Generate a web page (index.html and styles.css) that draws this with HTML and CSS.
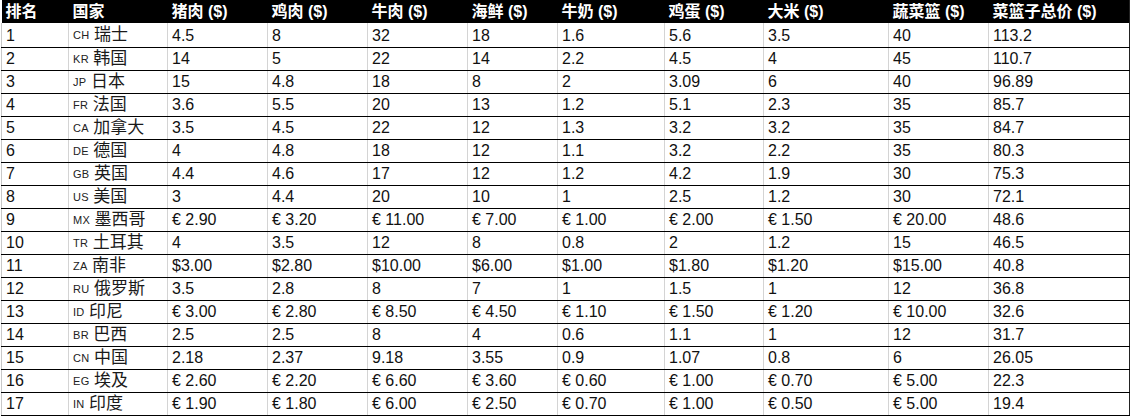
FILE: index.html
```html
<!DOCTYPE html>
<html lang="zh">
<head>
<meta charset="utf-8">
<title>菜篮子价格</title>
<link rel="stylesheet" href="styles.css">
</head>
<body>
<table class="sheet">
<colgroup>
<col class="c-rank"><col class="c-country"><col class="c-n"><col class="c-n"><col class="c-n"><col class="c-n2"><col class="c-n3"><col class="c-n2"><col class="c-n4"><col class="c-n"><col class="c-total">
</colgroup>
<thead>
<tr><th>排名</th><th>国家</th><th>猪肉 ($)</th><th>鸡肉 ($)</th><th>牛肉 ($)</th><th>海鲜 ($)</th><th>牛奶 ($)</th><th>鸡蛋 ($)</th><th>大米 ($)</th><th>蔬菜篮 ($)</th><th>菜篮子总价 ($)</th></tr>
</thead>
<tbody>
<tr class="first"><td>1</td><td><span class="cc">CH</span> <span class="zh">瑞士</span></td><td>4.5</td><td>8</td><td>32</td><td>18</td><td>1.6</td><td>5.6</td><td>3.5</td><td>40</td><td>113.2</td></tr>
<tr><td>2</td><td><span class="cc">KR</span> <span class="zh">韩国</span></td><td>14</td><td>5</td><td>22</td><td>14</td><td>2.2</td><td>4.5</td><td>4</td><td>45</td><td>110.7</td></tr>
<tr><td>3</td><td><span class="cc">JP</span> <span class="zh">日本</span></td><td>15</td><td>4.8</td><td>18</td><td>8</td><td>2</td><td>3.09</td><td>6</td><td>40</td><td>96.89</td></tr>
<tr><td>4</td><td><span class="cc">FR</span> <span class="zh">法国</span></td><td>3.6</td><td>5.5</td><td>20</td><td>13</td><td>1.2</td><td>5.1</td><td>2.3</td><td>35</td><td>85.7</td></tr>
<tr><td>5</td><td><span class="cc">CA</span> <span class="zh">加拿大</span></td><td>3.5</td><td>4.5</td><td>22</td><td>12</td><td>1.3</td><td>3.2</td><td>3.2</td><td>35</td><td>84.7</td></tr>
<tr><td>6</td><td><span class="cc">DE</span> <span class="zh">德国</span></td><td>4</td><td>4.8</td><td>18</td><td>12</td><td>1.1</td><td>3.2</td><td>2.2</td><td>35</td><td>80.3</td></tr>
<tr><td>7</td><td><span class="cc">GB</span> <span class="zh">英国</span></td><td>4.4</td><td>4.6</td><td>17</td><td>12</td><td>1.2</td><td>4.2</td><td>1.9</td><td>30</td><td>75.3</td></tr>
<tr><td>8</td><td><span class="cc">US</span> <span class="zh">美国</span></td><td>3</td><td>4.4</td><td>20</td><td>10</td><td>1</td><td>2.5</td><td>1.2</td><td>30</td><td>72.1</td></tr>
<tr><td>9</td><td><span class="cc">MX</span> <span class="zh">墨西哥</span></td><td>€ 2.90</td><td>€ 3.20</td><td>€ 11.00</td><td>€ 7.00</td><td>€ 1.00</td><td>€ 2.00</td><td>€ 1.50</td><td>€ 20.00</td><td>48.6</td></tr>
<tr><td>10</td><td><span class="cc">TR</span> <span class="zh">土耳其</span></td><td>4</td><td>3.5</td><td>12</td><td>8</td><td>0.8</td><td>2</td><td>1.2</td><td>15</td><td>46.5</td></tr>
<tr><td>11</td><td><span class="cc">ZA</span> <span class="zh">南非</span></td><td>$3.00</td><td>$2.80</td><td>$10.00</td><td>$6.00</td><td>$1.00</td><td>$1.80</td><td>$1.20</td><td>$15.00</td><td>40.8</td></tr>
<tr><td>12</td><td><span class="cc">RU</span> <span class="zh">俄罗斯</span></td><td>3.5</td><td>2.8</td><td>8</td><td>7</td><td>1</td><td>1.5</td><td>1</td><td>12</td><td>36.8</td></tr>
<tr><td>13</td><td><span class="cc">ID</span> <span class="zh">印尼</span></td><td>€ 3.00</td><td>€ 2.80</td><td>€ 8.50</td><td>€ 4.50</td><td>€ 1.10</td><td>€ 1.50</td><td>€ 1.20</td><td>€ 10.00</td><td>32.6</td></tr>
<tr><td>14</td><td><span class="cc">BR</span> <span class="zh">巴西</span></td><td>2.5</td><td>2.5</td><td>8</td><td>4</td><td>0.6</td><td>1.1</td><td>1</td><td>12</td><td>31.7</td></tr>
<tr><td>15</td><td><span class="cc">CN</span> <span class="zh">中国</span></td><td>2.18</td><td>2.37</td><td>9.18</td><td>3.55</td><td>0.9</td><td>1.07</td><td>0.8</td><td>6</td><td>26.05</td></tr>
<tr><td>16</td><td><span class="cc">EG</span> <span class="zh">埃及</span></td><td>€ 2.60</td><td>€ 2.20</td><td>€ 6.60</td><td>€ 3.60</td><td>€ 0.60</td><td>€ 1.00</td><td>€ 0.70</td><td>€ 5.00</td><td>22.3</td></tr>
<tr><td>17</td><td><span class="cc">IN</span> <span class="zh">印度</span></td><td>€ 1.90</td><td>€ 1.80</td><td>€ 6.00</td><td>€ 2.50</td><td>€ 0.70</td><td>€ 1.00</td><td>€ 0.50</td><td>€ 5.00</td><td>19.4</td></tr>
</tbody>
</table>
</body>
</html>
```
FILE: styles.css
```css
html, body {
  margin: 0;
  padding: 0;
  background: #ffffff;
}
body {
  padding-left: 1px;
  font-family: "Liberation Sans", "Noto Sans CJK SC", sans-serif;
  color: #111;
}
.sheet {
  border-collapse: collapse;
  table-layout: fixed;
  width: 1128px;
  font-size: 16px;
  border-right: 1px solid #222;
}
.c-rank { width: 67px; }
.c-country { width: 99px; }
.c-n { width: 100px; }
.c-n2 { width: 99px; }
.c-n3 { width: 107px; }
.c-n4 { width: 125px; }
.c-total { width: 141px; }
.sheet col:nth-child(6) { width: 90px; }
.sheet th {
  background: #000;
  color: #fff;
  font-weight: bold;
  text-align: left;
  height: 23px;
  padding: 0 4px;
  font-size: 16px;
  white-space: nowrap;
  border: 0;
  line-height: 23px;
}
.sheet td {
  height: 22px;
  padding: 0 4px;
  line-height: 22px;
  white-space: nowrap;
  border-left: 1px solid #d4d4d4;
  border-bottom: 1px solid #000;
  font-size: 16px;
}
.sheet tr.first td {
  height: 23px;
  line-height: 23px;
}
.sheet td:first-child {
  border-left: 1px solid #c8c8c8;
}
.cc {
  font-size: 11px;
  color: #222;
  letter-spacing: 0.3px;
  vertical-align: 1px;
}
.zh {
  font-size: 17px;
  color: #1a1a1a;
}
```
